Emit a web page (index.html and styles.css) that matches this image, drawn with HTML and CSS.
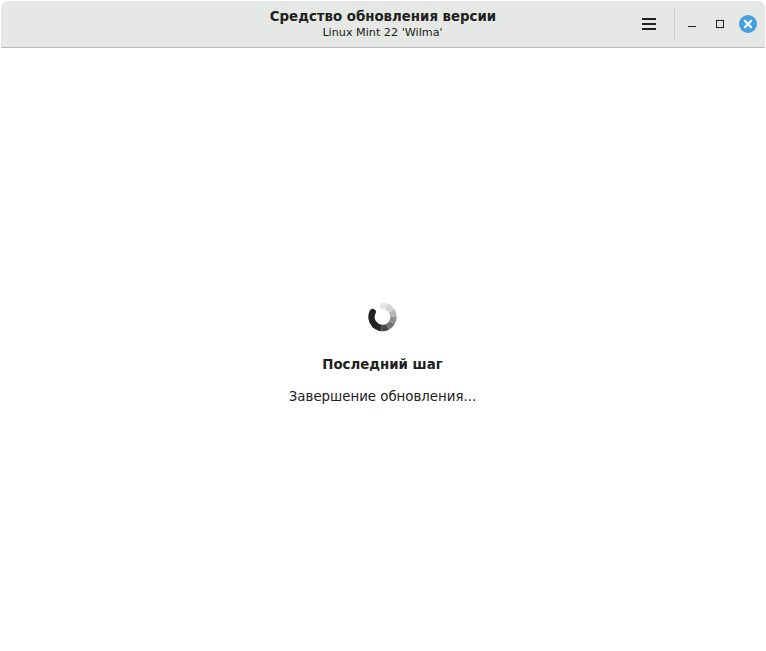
FILE: index.html
```html
<!DOCTYPE html>
<html lang="ru">
<head>
<meta charset="utf-8">
<title>Средство обновления версии</title>
<link rel="stylesheet" href="styles.css">
</head>
<body>
<div class="window">
  <header class="headerbar">
    <div class="titles">
      <h1 class="title">Средство обновления версии</h1>
      <p class="subtitle">Linux Mint 22 'Wilma'</p>
    </div>
    <div class="controls">
      <button class="menu" aria-label="Меню"><svg width="14" height="12"><path d="M0 1h14M0 6h14M0 11h14" stroke="#202020" stroke-width="2"/></svg></button>
      <span class="separator"></span>
      <button class="control" aria-label="Свернуть"><svg width="18" height="18"><path d="M5 11.5h8" stroke="#202020"/></svg></button>
      <button class="control" aria-label="Развернуть"><svg width="18" height="18"><rect x="5.5" y="5.5" width="7" height="7" fill="none" stroke="#202020"/></svg></button>
      <button class="control" aria-label="Закрыть"><svg width="18" height="18"><circle cx="9" cy="9" r="9" fill="#469fde"/><path d="M5.3 5.3l7.4 7.4M12.7 5.3l-7.4 7.4" stroke="#fff" stroke-width="2.2"/></svg></button>
    </div>
  </header>
  <main class="content">
    <svg class="spinner" width="30" height="30" viewBox="-14.5 -15 30 30">
      <g fill="none" stroke-width="6.4">
        <path d="M0.6 -11A11 11 0 0 1 5.5 -9.5" stroke="#e6e6e6" stroke-linecap="round"/>
        <path d="M4.2 -10.2A11 11 0 0 1 9.3 -5.9" stroke="#d4d4d4"/>
        <path d="M9.3 -5.9A11 11 0 0 1 11 0" stroke="#b4b4b4"/>
        <path d="M11 0A11 11 0 0 1 9.3 5.9" stroke="#8e8e8e"/>
        <path d="M9.3 5.9A11 11 0 0 1 5 9.8" stroke="#737373"/>
        <path d="M5 9.8A11 11 0 0 1 -1 10.95" stroke="#484848"/>
        <path d="M-1 10.95A11 11 0 0 1 -8 7.5" stroke="#2c2c2c"/>
        <path d="M-8 7.5A11 11 0 0 1 -9.8 -5" stroke="#222" stroke-linecap="round"/>
      </g>
    </svg>
    <h2 class="step">Последний шаг</h2>
    <p class="status">Завершение обновления...</p>
  </main>
</div>
</body>
</html>
```
FILE: styles.css
```css
* { box-sizing: border-box; }
body { margin: 0; background: #fff; color: #202020; font-family: "DejaVu Sans", sans-serif; }
h1, h2, p { margin: 0; }
button { border: 0; padding: 0; background: none; display: grid; place-items: center; }
svg { display: block; }
.window { height: 651px; padding: 1px 1px 0; display: flex; flex-direction: column; }
.headerbar { height: 47px; flex: none; display: grid; grid-template-columns: 1fr auto 1fr; background: #e6e8e5; border-bottom: 1px solid #b9bbb8; border-radius: 7px 7px 0 0; }
.titles { grid-column: 2; text-align: center; padding-top: 7px; }
.title { font-size: 13.333px; line-height: 17px; font-weight: bold; }
.subtitle { font-size: 11.2px; line-height: 15px; padding-right: 1px; }
.controls { grid-column: 3; display: flex; align-items: center; justify-content: flex-end; gap: 10px; padding-right: 8px; }
.menu { width: 32px; height: 32px; margin-right: -1px; }
.control { width: 18px; height: 18px; }
.separator { width: 1px; height: 32px; background: #d0d2cf; margin-right: -2px; }
.content { flex: 1; display: flex; flex-direction: column; align-items: center; padding: 254px 1px 0 0; }
.spinner { flex: none; }
.step { margin-top: 25px; font-size: 13.333px; line-height: 16px; }
.status { margin-top: 16px; font-size: 13.333px; line-height: 16px; }
```
